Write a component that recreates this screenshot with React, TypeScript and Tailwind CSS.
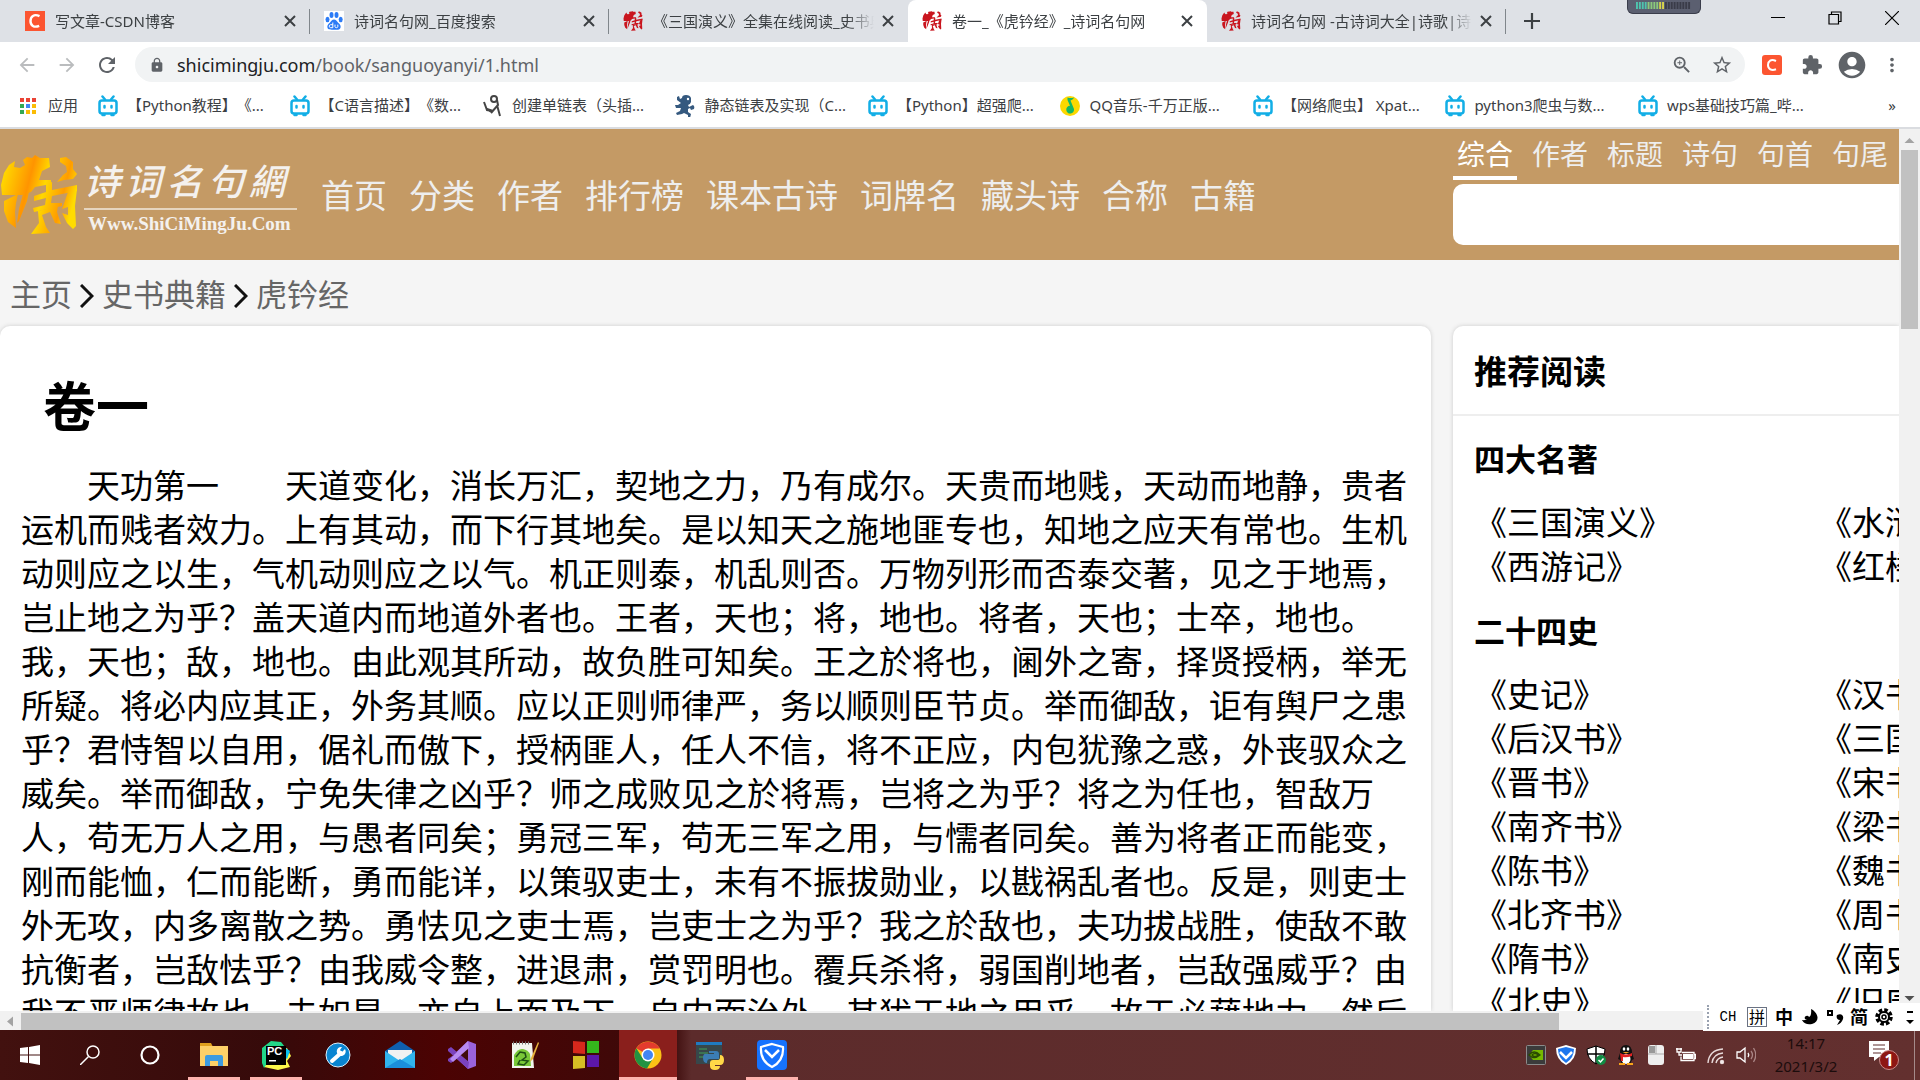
import type { ReactNode } from 'react';
import {
  MdAccountCircle,
  MdArrowBack,
  MdArrowForward,
  MdExtension,
  MdLock,
  MdMoreVert,
  MdRefresh,
  MdStarBorder,
  MdZoomIn,
} from 'react-icons/md';

const tabs = [
  { title: '写文章-CSDN博客', icon: 'csdn', active: false },
  { title: '诗词名句网_百度搜索', icon: 'baidu', active: false },
  { title: '《三国演义》全集在线阅读_史书典籍', icon: 'seal', active: false },
  { title: '卷一_《虎钤经》_诗词名句网', icon: 'seal', active: true },
  { title: '诗词名句网 -古诗词大全|诗歌|诗词', icon: 'seal', active: false },
];

const bookmarks = [
  { title: '【Python教程】《...', icon: 'bili' },
  { title: '【C语言描述】《数...', icon: 'bili' },
  { title: '创建单链表（头插...', icon: 'doodle' },
  { title: '静态链表及实现（C...', icon: 'gopher' },
  { title: '【Python】超强爬...', icon: 'bili' },
  { title: 'QQ音乐-千万正版...', icon: 'qqmusic' },
  { title: '【网络爬虫】 Xpat...', icon: 'bili' },
  { title: 'python3爬虫与数...', icon: 'bili' },
  { title: 'wps基础技巧篇_哔...', icon: 'bili' },
];

const navItems = ['首页', '分类', '作者', '排行榜', '课本古诗', '词牌名', '藏头诗', '合称', '古籍'];
const searchTypes = ['综合', '作者', '标题', '诗句', '句首', '句尾'];

const bookGroups = [
  { name: '四大名著', books: ['三国演义', '水浒传', '西游记', '红楼梦'] },
  {
    name: '二十四史',
    books: [
      '史记', '汉书', '后汉书', '三国志', '晋书', '宋书', '南齐书', '梁书',
      '陈书', '魏书', '北齐书', '周书', '隋书', '南史', '北史', '旧唐书',
    ],
  },
];

const chapter =
  '　　天功第一　　天道变化，消长万汇，契地之力，乃有成尔。天贵而地贱，天动而地静，贵者运机而贱者效力。上有其动，而下行其地矣。是以知天之施地匪专也，知地之应天有常也。生机动则应之以生，气机动则应之以气。机正则泰，机乱则否。万物列形而否泰交著，见之于地焉，岂止地之为乎？盖天道内而地道外者也。王者，天也；将，地也。将者，天也；士卒，地也。我，天也；敌，地也。由此观其所动，故负胜可知矣。王之於将也，阃外之寄，择贤授柄，举无所疑。将必内应其正，外务其顺。应以正则师律严，务以顺则臣节贞。举而御敌，讵有舆尸之患乎？君恃智以自用，倨礼而傲下，授柄匪人，任人不信，将不正应，内包犹豫之惑，外丧驭众之威矣。举而御敌，宁免失律之凶乎？师之成败见之於将焉，岂将之为乎？将之为任也，智敌万人，苟无万人之用，与愚者同矣；勇冠三军，苟无三军之用，与懦者同矣。善为将者正而能变，刚而能恤，仁而能断，勇而能详，以策驭吏士，未有不振拔勋业，以戡祸乱者也。反是，则吏士外无攻，内多离散之势。勇怯见之吏士焉，岂吏士之为乎？我之於敌也，夫功拔战胜，使敌不敢抗衡者，岂敌怯乎？由我威令整，进退肃，赏罚明也。覆兵杀将，弱国削地者，岂敌强威乎？由我不严师律故也，夫如是，亦自上而及下，自内而治外，其犹天地之用乎，故天必藉地力，然后';

function Seal({ fill, className }: { fill: string; className: string }) {
  return (
    <svg viewBox="0 0 78 80" className={className} fill={fill} aria-hidden="true">
      <defs>
        <linearGradient id="gold" gradientUnits="userSpaceOnUse" x1="0" y1="10" x2="78" y2="30">
          <stop offset="0" stopColor="#ffe600" />
          <stop offset="0.4" stopColor="#ff9400" />
          <stop offset="0.6" stopColor="#ffd800" />
          <stop offset="0.85" stopColor="#ff9c00" />
          <stop offset="1" stopColor="#ffdc00" />
        </linearGradient>
      </defs>
      <path d="M2 40 1 30 4 18 9 10l6-4-1 6 6 1 5-3-2-5 4-3 5 1 3-3 5 3 9 0 1 9-8 4-3 9h12v4l-16 3-4 5-9 3Z" />
      <path d="m60 3 6-1 7 5 0 7 4 5-4 5-9 1-7 2 6-7 4-3-1-6-6-4Z" />
      <path d="m4 46 14-7-2 9-1 9 1 16-8-6-4-11Z" />
      <path d="m24 35 6-3-3 14-8 20-2 2 2-14Z" />
      <path d="m34 41 12-4v-8l6-2v8l25-5v6l-25 5-1 7h11v3l-28 6-1-4 12-3 1-7-12 3Z" />
      <path d="m38 56 20-5-1 6 4 12-6-1-5-11-8 3 4 12 4 6-19 1 8-11Z" />
      <path d="m68 37 9-3-2 17 1 20-3 3-6-6-5-10 6 2v-8l-6 2Z" />
    </svg>
  );
}

function Favicon({ icon }: { icon: string }) {
  if (icon === 'seal') return <Seal fill="#c9151e" className="h-5 w-5 shrink-0" />;
  if (icon === 'csdn') {
    return (
      <svg viewBox="0 0 20 20" className="h-5 w-5 shrink-0">
        <rect width="20" height="20" fill="#fc5531" />
        <path d="M14.5 5.2C9 2.500 5.500 5.500 5.500 10s3.500 7 8.700 4.800" fill="none" stroke="#fff" strokeWidth="2.400" />
      </svg>
    );
  }
  if (icon === 'baidu') {
    return (
      <svg viewBox="0 0 20 20" className="h-5 w-5 shrink-0" fill="#2c7bf6">
        <rect width="20" height="20" fill="#fff" />
        <ellipse cx="3.500" cy="8.500" rx="2" ry="2.700" />
        <ellipse cx="7.500" cy="4" rx="2" ry="2.900" />
        <ellipse cx="12.500" cy="4" rx="2" ry="2.900" />
        <ellipse cx="16.700" cy="8.500" rx="2" ry="2.700" />
        <path d="M10 8.500c2 0 2.700 1.800 4.200 3.200 2.200 2 2.800 3.200 2.300 5-.6 2.300-3.500 2.300-6.500 2s-5.900.3-6.500-2c-.5-1.800.1-3 2.300-5C7.300 10.300 8 8.500 10 8.500Z" />
        <path d="M8.800 11.500v5.200H6.600c-1.800 0-1.800-3 0-3h2.200M11 13.600v2.200c0 1.200 2.800 1.200 2.800 0v-2.200" fill="none" stroke="#fff" />
      </svg>
    );
  }
  if (icon === 'bili') {
    return (
      <svg viewBox="0 0 20 22" className="h-[22px] w-5 shrink-0" fill="none" stroke="#12aee6" strokeWidth="2.500" strokeLinecap="round">
        <rect x="1.500" y="5.500" width="17" height="13" rx="2.500" />
        <path d="m4.500 1.500 2.500 3M15.500 1.500 13 4.500M4.500 20h2M13.500 20h2M6.500 11v1.500M13.500 11v1.500" />
      </svg>
    );
  }
  if (icon === 'qqmusic') {
    return (
      <svg viewBox="0 0 20 20" className="h-5 w-5 shrink-0">
        <circle cx="10" cy="10" r="10" fill="#fcd800" />
        <path d="M7.500 1.500c2 .6 4 .8 6.500 0-.8 1.800-2 2.500-3.500 3L14 13a3.900 3.900 0 1 1-4-3.200L7.500 4Z" fill="#14b866" />
      </svg>
    );
  }
  if (icon === 'gopher') {
    return (
      <svg viewBox="0 0 20 22" className="h-[22px] w-5 shrink-0" fill="#35597f">
        <path d="M7 3q0-3 4-3t5 3v4q-1 3-3 3l1 2 4-2q2 1 1 4l-3 1-1-2-2 1v3l3 2-1 4h-2l0-3-4-2-2 1-5 1-1-2 4-2 1-3-5 0-1-3 3 0 3-2-4-3 0-3 2-1 1 3Z" />
        <circle cx="13" cy="4" r="1.200" fill="#fff" />
      </svg>
    );
  }
  return (
    <svg viewBox="0 0 20 22" className="h-[22px] w-5 shrink-0" fill="none" stroke="#444" strokeWidth="2">
      <circle cx="11" cy="4" r="3" />
      <path d="m1 7 3 8 6 1-6-2M14 5l1 5-7 8M14 10l3 11M9 17l-4-2" />
    </svg>
  );
}

function Close() {
  return (
    <svg viewBox="0 0 12 12" className="h-3 w-3" stroke="#3c4043" strokeWidth="2">
      <path d="m1 1 10 10M11 1 1 11" />
    </svg>
  );
}

function TabStrip() {
  return (
    <div className="relative flex h-[42px] shrink-0 bg-[#dee1e6] pl-[11px]">
      {tabs.map((tab, i) => (
        <div key={i} className={`flex w-[299px] items-center pl-[14px] ${tab.active ? 'rounded-t-lg bg-white' : ''}`}>
          <Favicon icon={tab.icon} />
          <span className="mr-1 ml-[10px] flex-1 overflow-hidden whitespace-nowrap [mask-image:linear-gradient(to_right,black_88%,transparent)]">
            {tab.title}
          </span>
          <button type="button" aria-label="关闭标签页" className="mr-[9px] p-1">
            <Close />
          </button>
          <span className={`h-[25px] border-r ${tab.active || i === 2 ? 'border-transparent' : 'border-[#80868b]'}`} />
        </div>
      ))}
      <button type="button" aria-label="打开新的标签页" className="px-[18px]">
        <svg viewBox="0 0 16 16" className="h-4 w-4" stroke="#3c4043" strokeWidth="2.200">
          <path d="M8 0v16M0 8h16" />
        </svg>
      </button>
      <div className="mb-[6px] ml-auto flex">
        <button type="button" aria-label="最小化" className="flex w-[57px] items-center justify-center">
          <svg viewBox="0 0 14 14" className="h-[14px] w-[14px]" stroke="#000"><path d="M0 6.500h14" /></svg>
        </button>
        <button type="button" aria-label="还原" className="flex w-[57px] items-center justify-center">
          <svg viewBox="0 0 14 14" className="h-[14px] w-[14px]" fill="none" stroke="#000" strokeWidth="1.200">
            <path d="M1 3.500h9.500V13H1ZM3.500 3.500V1H13v9.500h-2.500" />
          </svg>
        </button>
        <button type="button" aria-label="关闭" className="flex w-[57px] items-center justify-center">
          <svg viewBox="0 0 14 14" className="h-[14px] w-[14px]" stroke="#000" strokeWidth="1.200"><path d="m0 0 14 14M14 0 0 14" /></svg>
        </button>
      </div>
      {/* level meter gadget hanging from the top edge */}
      <div className="absolute top-0 right-[219px] h-[14px] w-[74px] rounded-b-md border border-t-0 border-[#3a3d4b] bg-[#5b5f70] px-2 pt-[2px]">
        <svg viewBox="0 0 58 7" className="h-[7px] w-full" preserveAspectRatio="none">
          {Array.from({ length: 19 }, (_, i) => (
            <rect key={i} x={i * 3} width="2" height="7" fill={i < 4 ? '#4fc3ae' : i < 8 ? '#8bc97c' : i < 10 ? '#d6d24c' : '#3a3c49'} />
          ))}
        </svg>
      </div>
    </div>
  );
}

function Toolbar() {
  return (
    <div className="flex h-[45px] shrink-0 items-center bg-white pr-2 pl-[7px] text-[22px] text-[#5f6368]">
      <button type="button" aria-label="后退" className="flex w-10 justify-center text-[#babcbe]"><MdArrowBack /></button>
      <button type="button" aria-label="前进" className="flex w-10 justify-center text-[#babcbe]"><MdArrowForward /></button>
      <button type="button" aria-label="重新加载" className="flex w-10 justify-center text-2xl"><MdRefresh /></button>
      <div className="ml-2 flex h-[35px] flex-1 items-center rounded-full bg-[#f1f3f4] pr-[3px] pl-[14px]">
        <MdLock className="mr-3 text-base" />
        <a href="#" className="flex-1 text-lg">
          <span className="text-[#202124]">shicimingju.com</span>/book/sanguoyanyi/1.html
        </a>
        <button type="button" aria-label="缩放" className="flex w-10 justify-center"><MdZoomIn /></button>
        <button type="button" aria-label="收藏" className="flex w-10 justify-center"><MdStarBorder /></button>
      </div>
      <button type="button" aria-label="CSDN" className="ml-[7px] flex w-10 justify-center">
        <svg viewBox="0 0 20 20" className="h-5 w-5">
          <rect width="20" height="20" rx="3" fill="#fc5531" />
          <path d="M14 6C9 3.500 6 6 6 10s3.500 6 8 4.200" fill="none" stroke="#fff" strokeWidth="2" />
        </svg>
      </button>
      <button type="button" aria-label="扩展程序" className="flex w-10 justify-center"><MdExtension /></button>
      <button type="button" aria-label="用户" className="flex w-10 justify-center text-[32px]"><MdAccountCircle /></button>
      <button type="button" aria-label="菜单" className="flex w-10 justify-center"><MdMoreVert /></button>
    </div>
  );
}

function BookmarkBar() {
  const dots = ['#ea4335', '#ea4335', '#ea4335', '#34a853', '#4285f4', '#fbbc05', '#34a853', '#fbbc05', '#fbbc05'];
  return (
    <div className="flex h-[42px] shrink-0 items-center border-b-2 border-[#dadce0] bg-white pr-[24px] pb-[3px] pl-5">
      <a href="#" className="flex w-[78px] items-center gap-3">
        <svg viewBox="0 0 16 16" className="h-4 w-4">
          {dots.map((c, i) => (
            <rect key={i} x={(i % 3) * 6} y={Math.floor(i / 3) * 6} width="4" height="4" fill={c} />
          ))}
        </svg>
        应用
      </a>
      <nav className="mr-[58px] grid flex-1 grid-cols-9">
        {bookmarks.map((b) => (
          <a key={b.title} href="#" className="flex items-center gap-[9px] whitespace-nowrap">
            <Favicon icon={b.icon} />
            {b.title}
          </a>
        ))}
      </nav>
      <button type="button" aria-label="更多书签">»</button>
    </div>
  );
}

function SiteHeader() {
  return (
    <header className="flex h-[131px] shrink-0 bg-[#c49a65]">
      <a href="#" aria-label="诗词名句网" className="flex items-center gap-[6px]">
        <Seal fill="url(#gold)" className="h-20 w-[78px]" />
        <span className="w-[213px] text-[#f4f1ee]">
          <span className="flex justify-between border-b-2 border-[#e6d5bf] pt-1 pr-3 text-[36px] leading-[52px] font-medium italic">
            {'诗词名句網'.split('').map((c) => (
              <span key={c}>{c}</span>
            ))}
          </span>
          <span className="block pl-1 font-[Liberation_Serif,serif] text-[19px] leading-7 font-bold">Www.ShiCiMingJu.Com</span>
        </span>
      </a>
      <nav className="ml-6 flex items-center gap-[22px] pt-[2px] text-[33px] text-[#eee]">
        {navItems.map((item) => (
          <a key={item} href="#" className="whitespace-nowrap">{item}</a>
        ))}
      </nav>
      <form className="ml-auto flex w-[446px] shrink-0 flex-col">
        <div className="mb-1 flex gap-[11px] text-[28px] leading-[43px] text-[#eee]">
          {searchTypes.map((type, i) => (
            <button
              key={type}
              type="button"
              className={`border-b-4 px-1 pt-1 whitespace-nowrap ${i === 0 ? 'border-white text-white' : 'border-transparent'}`}
            >
              {type}
            </button>
          ))}
        </div>
        <input type="text" aria-label="搜索" className="h-[61px] rounded-l-[10px] bg-white px-3 text-[28px] outline-none" />
      </form>
    </header>
  );
}

function Breadcrumb() {
  return (
    <nav className="flex h-[66px] shrink-0 items-center gap-2 pt-[2px] pl-[10px] text-[31px] text-[#666]">
      {['主页', '史书典籍', '虎钤经'].map((item, i) => (
        <span key={item} className="flex items-center gap-2">
          {i > 0 && (
            <svg viewBox="0 0 14 24" className="mt-1 h-6 w-[14px]" fill="none" stroke="#111" strokeWidth="3">
              <path d="m1 1 11 11L1 23" />
            </svg>
          )}
          <a href="#">{item}</a>
        </span>
      ))}
    </nav>
  );
}

function Sidebar() {
  return (
    <aside className="w-[446px] shrink-0 overflow-hidden rounded-tl-[10px] bg-white whitespace-nowrap shadow-[0_0_4px_#ccc]">
      <h2 className="border-b-2 border-[#eee] px-[21px] pt-1 text-[33px] leading-[84px] font-bold">推荐阅读</h2>
      <div className="flex flex-col gap-5 px-[21px] pt-[21px]">
        {bookGroups.map((group) => (
          <section key={group.name}>
            <h3 className="mb-5 text-[31px] leading-[44px] font-bold">{group.name}</h3>
            <ul className="grid grid-cols-[345px_345px] text-[33px] leading-[44px]">
              {group.books.map((book) => (
                <li key={book}><a href="#">《{book}》</a></li>
              ))}
            </ul>
          </section>
        ))}
      </div>
    </aside>
  );
}

function Site() {
  return (
    <div className="flex min-h-0 flex-1">
      <div className="flex min-w-0 flex-1 flex-col">
        <div className="flex min-h-0 flex-1 flex-col overflow-hidden bg-[#f5f5f5] text-black">
          <SiteHeader />
          <Breadcrumb />
          <div className="flex min-h-0 flex-1 gap-[22px]">
            <main className="min-w-0 flex-1 rounded-t-[10px] bg-white px-[21px] pt-12 shadow-[0_0_4px_#ccc]">
              <h1 className="mb-6 pl-[22px] text-[53px] leading-[66px] font-bold">卷一</h1>
              <p className="text-[33px] leading-[44px]">{chapter}</p>
            </main>
            <Sidebar />
          </div>
        </div>
        <div className="flex h-[19px] shrink-0 items-center bg-[#f1f1f1] pt-[2px]">
          <svg viewBox="0 0 21 17" className="h-[17px] w-[21px]" fill="#a3a3a3"><path d="m7 8.500 6-5v10Z" /></svg>
          <div className="h-full w-[81%] bg-[#c1c1c1]" />
        </div>
      </div>
      <div className="flex w-[21px] shrink-0 flex-col items-center bg-[#f1f1f1]">
        <svg viewBox="0 0 21 21" className="h-[21px] w-[21px]" fill="#a3a3a3"><path d="m10.500 9 5 5h-10Z" /></svg>
        <div className="h-[179px] w-[17px] bg-[#c1c1c1]" />
        <svg viewBox="0 0 21 21" className="mt-auto mb-[22px] h-[21px] w-[21px]" fill="#505050"><path d="m10.500 14 5-5h-10Z" /></svg>
      </div>
    </div>
  );
}

function ImeBar() {
  return (
    <div className="absolute right-0 bottom-[49px] flex h-7 w-[217px] items-center bg-white pr-1 pl-1 text-black">
      <span className="h-6 border-l-2 border-dotted border-gray-400" />
      <button type="button" className="w-[38px] font-[Liberation_Mono,monospace] text-sm">CH</button>
      <button type="button" className="h-5 w-5 border border-gray-500 text-base leading-[18px]">拼</button>
      <button type="button" className="ml-2 text-lg leading-6 font-bold">中</button>
      <button type="button" aria-label="半角" className="ml-2">
        <svg viewBox="0 0 18 18" className="h-[18px] w-[18px]">
          <path d="M10 1c8 4 9 13 1 15-4 1-8 0-10-4 7 1 10-4 9-11Z" />
          <path d="M4 11a2 2 0 0 1 4-2l3-2-2 6Z" />
        </svg>
      </button>
      <button type="button" aria-label="中文标点" className="ml-[7px]">
        <svg viewBox="0 0 18 18" className="h-[18px] w-[18px]">
          <rect x="2" y="3" width="4" height="4" fill="none" stroke="#000" strokeWidth="2" />
          <path d="M11 7c4-2 7 0 6 4-1 3-3 5-6 6l3-5c-3 0-4-3-3-5Z" />
        </svg>
      </button>
      <button type="button" className="ml-[6px] text-lg leading-6 font-bold">简</button>
      <button type="button" aria-label="设置" className="ml-[7px]">
        <svg viewBox="0 0 18 18" className="h-[18px] w-[18px]" fill="none" stroke="#000">
          <circle cx="9" cy="9" r="7" strokeWidth="3.500" strokeDasharray="3.500 2" />
          <circle cx="9" cy="9" r="5" strokeWidth="2" />
          <circle cx="9" cy="9" r="2" strokeWidth="1.500" />
        </svg>
      </button>
      <button type="button" aria-label="选项" className="ml-auto">
        <svg viewBox="0 0 12 18" className="h-[18px] w-3"><path d="M3 3h6v2H3ZM2 12h8l-4 4Z" /></svg>
      </button>
    </div>
  );
}

const apps: { name: string; open?: boolean; focus?: boolean; icon: ReactNode }[] = [
  {
    name: '文件资源管理器',
    open: true,
    icon: (
      <>
        <path d="M1 3h11l2 4H1Z" fill="#e0a01e" />
        <path d="M1 6h28v20H1Z" fill="#fdd068" />
        <path d="M6 26v-9q0-2 2-2h14q2 0 2 2v9h-5v-5h-8v5Z" fill="#3d9be0" />
      </>
    ),
  },
  {
    name: 'PyCharm',
    open: true,
    icon: (
      <>
        <path d="m1 8 9-7 10 1 4 5-4 12-16 4-3-7Z" fill="#21d789" />
        <path d="m20 9 6-1 4 8-4 5 3 6-12 3-14-3 3-8Z" fill="#fcf84a" />
        <path d="m1 10 4-3v18l-2 3-2-5Z" fill="#21d789" />
        <path d="m23 7 6 4-3 8-5-4Z" fill="#07c3f2" />
        <path d="M5 6h20v19H5Z" fill="#000" />
        <text x="6" y="15" fontSize="11" fontWeight="700" fill="#fff" fontFamily="Liberation Sans">PC</text>
        <path d="M8 20h7v1.500H8Z" fill="#fff" />
      </>
    ),
  },
  {
    name: '修复工具',
    icon: (
      <>
        <circle cx="15" cy="15" r="12" fill="#0a85d1" stroke="#dceefa" />
        <path d="m9 21 9-8" stroke="#fff" strokeWidth="4" strokeLinecap="round" />
        <path d="M22 9a4.500 4.500 0 1 1-3-2l-2 3 2 2Z" fill="#fff" />
      </>
    ),
  },
  {
    name: '邮件',
    icon: (
      <>
        <path d="M0 11 15 1l15 10v5H0Z" fill="#0f5fae" />
        <path d="M3 10h24v10H3Z" fill="#f2f2f2" />
        <path d="M0 11v17h30V11L15 21Z" fill="#31b4ee" />
        <path d="m0 28 15-9 15 9Z" fill="#1b8fdc" />
      </>
    ),
  },
  {
    name: 'Visual Studio',
    icon: (
      <>
        <path d="m21 1 8 3v22l-8 3L6 15Z" fill="#9a63dc" />
        <path d="m21 8-9 7 9 7Z" fill="#3f0b0b" />
        <path d="m1 9 3-2 18 15-1 7L1 11ZM1 19v2l3 2 7-6-3-3Z" fill="#7a42bd" />
        <path d="M21 1 3 19l3 3L22 8Z" fill="#b78af0" />
      </>
    ),
  },
  {
    name: 'Notepad++',
    icon: (
      <>
        <path d="M3 3h20l2 25H3Z" fill="#f2f5ee" />
        <path d="M5 15q4-7 9-6t7 5l1 12H5Z" fill="#79c838" />
        <path d="m7 17 4-5 5 1 1 4-4 3 6 1-4 4-6-1 2-4" fill="none" stroke="#1d4d14" strokeWidth="1.500" />
        <path d="M4 3h18" stroke="#777" strokeWidth="3" strokeDasharray="1 2" />
        <path d="m29 2-7 16-1 4 3-3 6-16Z" fill="#e8b33c" />
      </>
    ),
  },
  {
    name: '四色窗口',
    icon: (
      <>
        <path d="m2 1 12 1v12l-12-1Z" fill="#d8281c" />
        <path d="M16 1h12v12H16Z" fill="#35b71c" />
        <path d="M2 16h12v12l-12 1Z" fill="#d6be24" />
        <path d="M16 15h12v12H16Z" fill="#5c17a8" />
      </>
    ),
  },
  {
    name: 'Chrome',
    open: true,
    focus: true,
    icon: (
      <>
        <circle cx="15" cy="15" r="13.500" fill="#fbc116" />
        <path d="M15 15 3.300 8.300A13.500 13.500 0 0 1 26.700 8.500H15Z" fill="#e33b2e" />
        <path d="M3.300 8.300A13.500 13.500 0 0 0 14 28.500l6.500-11L9.500 18Z" fill="#229342" />
        <circle cx="15" cy="15" r="6.500" fill="#fff" />
        <circle cx="15" cy="15" r="5" fill="#4285f4" />
      </>
    ),
  },
  {
    name: 'Python',
    icon: (
      <>
        <path d="M1 2h26v22H1Z" fill="#37474b" />
        <path d="M1 2h26v3H1Z" fill="#1f7bc1" />
        <path d="M4 9h8M4 13h9M4 17h6" stroke="#43a35b" />
        <path d="M14 11h7q3 0 3 3v5h-9q-3 0-3 4-4 0-4-5t4-4h7v-1h-5Z" fill="#3b7db4" />
        <path d="M25 15q4 0 4 5t-4 5h-5v1h5q0 4-5 4t-5-4v-3q0-3 3-3h5q2 0 2-3Z" fill="#ffd847" />
      </>
    ),
  },
  {
    name: '电脑管家',
    open: true,
    icon: (
      <>
        <rect width="30" height="30" rx="4" fill="#1673ff" />
        <path d="m15 4 11 3q1 14-11 20Q3 21 4 7Z" fill="none" stroke="#fff" strokeWidth="2.200" />
        <path d="m8 10 7 7 7-7" fill="none" stroke="#fff" strokeWidth="2.500" />
      </>
    ),
  },
];

const tray: { name: string; icon: ReactNode }[] = [
  {
    name: 'NVIDIA',
    icon: (
      <>
        <rect x=".5" y=".5" width="19" height="19" rx="1" fill="#3b3b3b" stroke="#8b8b8b" />
        <path d="M7 5h10v10H7l-4-5Z" fill="#76b900" />
        <path d="M3 10q5-6 11 0-6 5-11 0Zm3 0q3-3 6 0-3 3-6 0Z" fill="none" stroke="#2a4a00" strokeWidth="1.300" />
      </>
    ),
  },
  {
    name: '电脑管家',
    icon: (
      <>
        <path d="m10 0 10 3q0 12-10 17Q0 15 0 3Z" fill="#fff" />
        <path d="m10 2 8 2q0 9-8 14Q2 13 2 4Z" fill="#1d76ee" />
        <path d="m4 7 6 6 6-6" fill="none" stroke="#fff" strokeWidth="2.500" />
      </>
    ),
  },
  {
    name: '安全中心',
    icon: (
      <>
        <path d="m10 1 9 3q0 10-9 15Q1 14 1 4Z" fill="#fff" stroke="#000" />
        <path d="M10 1v18M1 9h18" stroke="#000" strokeWidth="1.500" />
        <circle cx="15" cy="15" r="5" fill="#118c44" />
        <path d="m12.500 15 2 2 3-3.500" fill="none" stroke="#fff" strokeWidth="1.500" />
      </>
    ),
  },
  {
    name: 'QQ',
    icon: (
      <>
        <path d="M4 8q0-8 6-8t6 8l2 6-2 1-2 4H6l-2-4-2-1Z" fill="#111" />
        <ellipse cx="10" cy="14" rx="4.500" ry="5" fill="#fff" />
        <ellipse cx="8" cy="4" rx="1.300" ry="1.800" fill="#fff" />
        <ellipse cx="12" cy="4" rx="1.300" ry="1.800" fill="#fff" />
        <path d="M4 8q6 3 12 0v3q-6 2-9 1v4H5Z" fill="#e32222" />
        <path d="M6.500 7h7l-3.500 1.500ZM3 18h6v2H3Zm8 0h6v2h-6Z" fill="#f9a51a" />
      </>
    ),
  },
  {
    name: '鼠标',
    icon: (
      <>
        <rect x="2" y="0" width="16" height="20" rx="3" fill="#eee" />
        <path d="M3 1h6v7H3Z" fill="#999" />
        <path d="M10 0v9M2 9h16" stroke="#aaa" />
      </>
    ),
  },
  {
    name: '电源',
    icon: (
      <g fill="none" stroke="#fff" strokeWidth="1.300">
        <path d="M6 7.500h12v8H5v-4M18 9.500h1.500v4H18" />
        <path d="M7 9h10v5H7Z" fill="#fff" stroke="none" />
        <path d="M1 3v4h4V3M0 4h6M3 7v3h3" />
      </g>
    ),
  },
  {
    name: '网络',
    icon: (
      <g fill="none" stroke="#e8dada" strokeWidth="1.400">
        <path d="M2 18Q3 5 17 4M6 18Q7 9 17 8M10 18q1-5 7-6" />
        <circle cx="16" cy="17" r="1.500" fill="#fff" />
      </g>
    ),
  },
  {
    name: '音量',
    icon: (
      <g fill="none" stroke="#fff" strokeWidth="1.300">
        <path d="M1 7h3l5-4v14l-5-4H1Z" />
        <path d="M12 8q1.500 2 0 4" />
        <path d="M15 6q3 4 0 8M17.500 3q4.500 7 0 14" stroke="#a98585" />
      </g>
    ),
  },
];

function Taskbar() {
  return (
    <footer className="flex h-[50px] shrink-0 bg-[linear-gradient(to_right,#42110f_0,#360a0a_14%,#4b0303_23%,#3c0a0a_35%,#5c2b2b_36%,#63302f_100%)]">
      <button type="button" aria-label="开始" className="flex w-[60px] items-center justify-center">
        <svg viewBox="0 0 20 20" className="h-5 w-5" fill="#fff"><path d="m0 3 8-1v7.500H0ZM9 2l11-2v9.500H9ZM0 10.500h8V18l-8-1ZM9 10.500h11V20L9 18Z" /></svg>
      </button>
      <button type="button" aria-label="搜索" className="flex w-[60px] items-center justify-center">
        <svg viewBox="0 0 20 20" className="h-5 w-5" fill="none" stroke="#fff" strokeWidth="1.500"><circle cx="13" cy="7" r="6" /><path d="M8.500 11.500 0 20" /></svg>
      </button>
      <button type="button" aria-label="Cortana" className="mr-[3px] flex w-[60px] items-center justify-center">
        <svg viewBox="0 0 20 20" className="h-5 w-5" fill="none" stroke="#fff" strokeWidth="2.200"><circle cx="10" cy="10" r="8.500" /></svg>
      </button>
      {apps.map((app) => (
        <button
          key={app.name}
          type="button"
          aria-label={app.name}
          className={`flex w-[62px] flex-col items-center ${app.focus ? 'bg-[#8a1f1c] bg-clip-content px-[2px]' : 'px-[5px]'}`}
        >
          <svg viewBox="0 0 30 30" className="mt-[10px] h-[30px] w-[30px]">{app.icon}</svg>
          {app.open && <span className="mt-auto h-[3px] w-full bg-[#ffb3ae]" />}
        </button>
      ))}
      <div className="ml-auto flex items-center gap-[10px]">
        {tray.map((item) => (
          <button key={item.name} type="button" aria-label={item.name}>
            <svg viewBox="0 0 20 20" className="h-5 w-5">{item.icon}</svg>
          </button>
        ))}
      </div>
      <button type="button" className="mx-2 w-[84px] text-[15px] leading-[23px] text-[#1c0c0c]">
        14:17
        <br />
        2021/3/2
      </button>
      <button type="button" aria-label="通知" className="ml-[11px] w-[47px]">
        <svg viewBox="0 0 32 32" className="h-8 w-8">
          <path d="M2 2h20v16H12l-5 4v-4H2Z" fill="#fff" />
          <path d="M6 6h12M6 10h12M6 14h8" stroke="#5f2c2c" strokeWidth="1.200" />
          <circle cx="22" cy="21" r="9.500" fill="#8e1713" stroke="#c98a88" />
          <text x="22" y="27" textAnchor="middle" fontSize="16" fontWeight="700" fill="#fff">1</text>
        </svg>
      </button>
      <span className="mr-[5px] border-l border-[#a58a8a]" />
    </footer>
  );
}

export default function App() {
  return (
    <div className="relative flex h-screen flex-col overflow-hidden font-[Noto_Sans,Noto_Sans_CJK_SC,sans-serif] text-[15px] text-[#3c4043] [text-spacing-trim:space-all]">
      <TabStrip />
      <Toolbar />
      <BookmarkBar />
      <Site />
      <Taskbar />
      <ImeBar />
    </div>
  );
}
